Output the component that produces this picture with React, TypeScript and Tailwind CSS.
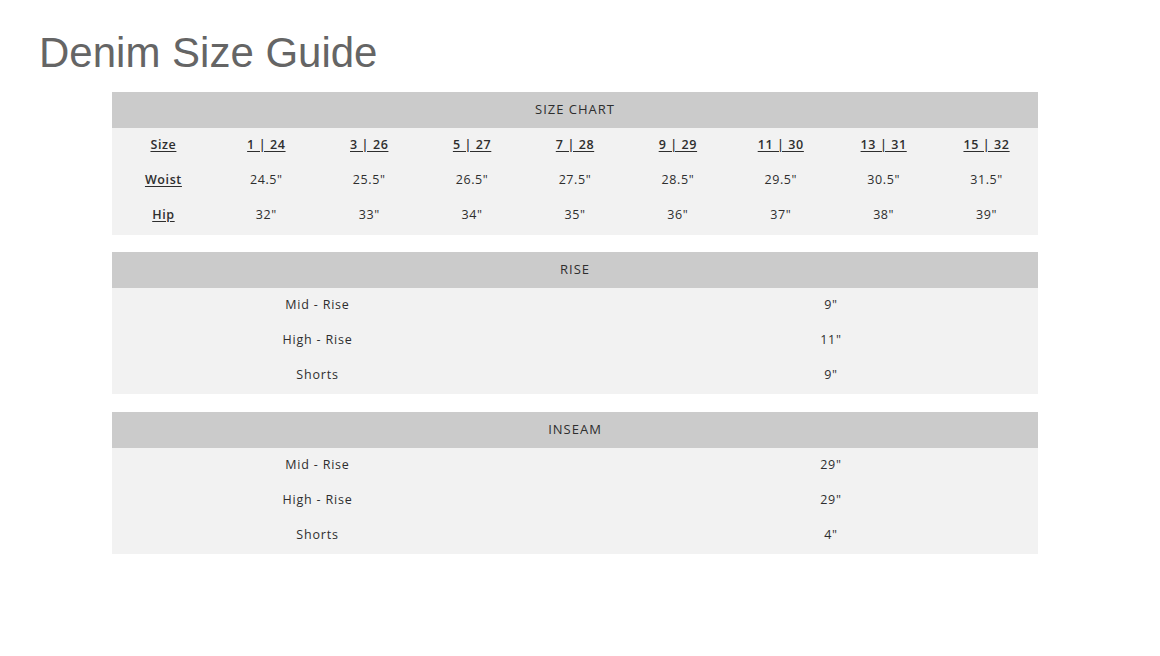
import React from "react";

const sizes = ["1 | 24", "3 | 26", "5 | 27", "7 | 28", "9 | 29", "11 | 30", "13 | 31", "15 | 32"];
const waist = ["24.5\"", "25.5\"", "26.5\"", "27.5\"", "28.5\"", "29.5\"", "30.5\"", "31.5\""];
const hip = ["32\"", "33\"", "34\"", "35\"", "36\"", "37\"", "38\"", "39\""];

function Header({ title }: { title: string }) {
  return (
    <div className="h-[36px] bg-[#cbcbcb] flex items-center justify-center text-[13px] font-medium text-[#2e2e2e] tracking-[1px]">
      {title}
    </div>
  );
}

function TwoCol({ title, rows }: { title: string; rows: [string, string][] }) {
  return (
    <div className="w-[926px]">
      <Header title={title} />
      <div className="bg-[#f2f2f2] pb-[1px]">
        {rows.map(([a, b]) => (
          <div key={a} className="flex h-[35px] items-center text-[12.5px] text-[#2e2e2e] tracking-[0.8px]">
            <div className="w-[411px] text-center font-medium">{a}</div>
            <div className="flex-1 pl-[101px] text-center">{b}</div>
          </div>
        ))}
      </div>
    </div>
  );
}

export default function App() {
  return (
    <div className="w-[1160px] h-[656px] bg-white" style={{ fontFamily: "'Open Sans', 'Noto Sans', sans-serif" }}>
      <h1
        className="pl-[39px] pt-[32px] text-[42px] leading-none text-[#656565]"
        style={{ fontFamily: "'Liberation Sans', Arial, sans-serif" }}
      >
        Denim Size Guide
      </h1>
      <div className="pl-[112px] pt-[18px] flex flex-col">
        <div className="w-[926px]">
          <Header title="SIZE CHART" />
          <div className="bg-[#f2f2f2] pb-[2px] text-[12.5px] text-[#2e2e2e] tracking-[0.6px]">
            <div className="grid grid-cols-9 h-[35px] items-center">
              <div className="text-center font-semibold underline underline-offset-2">Size</div>
              {sizes.map((s) => (
                <div key={s} className="text-center font-semibold underline underline-offset-2">{s}</div>
              ))}
            </div>
            <div className="grid grid-cols-9 h-[35px] items-center">
              <div className="text-center font-semibold underline underline-offset-2">Woist</div>
              {waist.map((s) => (
                <div key={s} className="text-center">{s}</div>
              ))}
            </div>
            <div className="grid grid-cols-9 h-[35px] items-center">
              <div className="text-center font-semibold underline underline-offset-2">Hip</div>
              {hip.map((s) => (
                <div key={s} className="text-center">{s}</div>
              ))}
            </div>
          </div>
        </div>
        <div className="h-[17px]" />
        <TwoCol title="RISE" rows={[["Mid - Rise", "9\""], ["High - Rise", "11\""], ["Shorts", "9\""]]} />
        <div className="h-[18px]" />
        <TwoCol title="INSEAM" rows={[["Mid - Rise", "29\""], ["High - Rise", "29\""], ["Shorts", "4\""]]} />
      </div>
    </div>
  );
}
